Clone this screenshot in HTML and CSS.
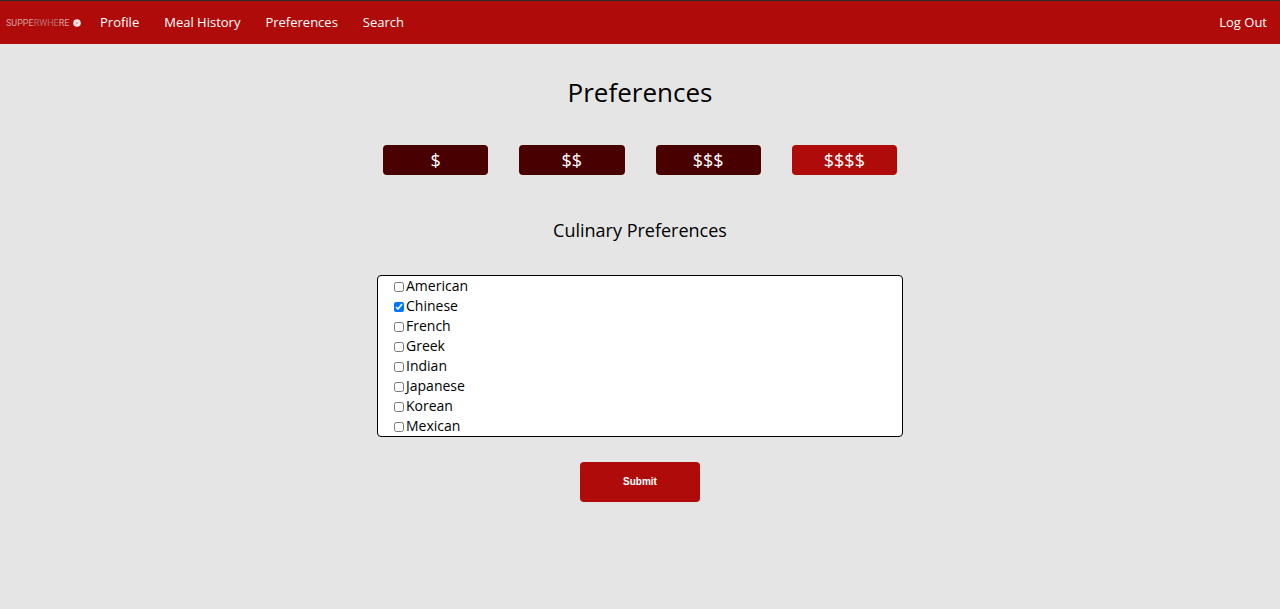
FILE: index.html
```html
<!DOCTYPE html>
<html lang="en">
<head>
<meta charset="utf-8">
<title>Supperwhere - Preferences</title>
<link rel="stylesheet" href="styles.css">
</head>
<body>
<nav class="navbar">
  <a class="logo" href="#">
    <span>SUPPE<span class="logo-dim">RWHE</span>RE</span>
    <svg class="logo-mark" viewBox="0 0 8 8" aria-hidden="true">
      <circle cx="4" cy="4" r="3.8" fill="#f0e4e4"/>
      <path d="M2.5 2.4 L3.4 3.4 M5.5 2.4 L4.6 3.4 M3 3.8 H5 L4 5.2 Z" fill="#e08080" stroke="#d89a9a" stroke-width=".4"/>
    </svg>
  </a>
  <a class="nav-link" href="#">Profile</a>
  <a class="nav-link" href="#">Meal History</a>
  <a class="nav-link" href="#">Preferences</a>
  <a class="nav-link" href="#">Search</a>
  <a class="nav-link logout" href="#">Log Out</a>
</nav>
<main class="content">
  <h1 class="title">Preferences</h1>
  <form class="form">
    <div class="prices">
      <button class="price" type="button">$</button>
      <button class="price" type="button">$$</button>
      <button class="price" type="button">$$$</button>
      <button class="price selected" type="button">$$$$</button>
    </div>
    <h2 class="subtitle">Culinary Preferences</h2>
    <div class="cuisines">
      <label class="cuisine"><input class="check" type="checkbox">American</label>
      <label class="cuisine"><input class="check" type="checkbox" checked>Chinese</label>
      <label class="cuisine"><input class="check" type="checkbox">French</label>
      <label class="cuisine"><input class="check" type="checkbox">Greek</label>
      <label class="cuisine"><input class="check" type="checkbox">Indian</label>
      <label class="cuisine"><input class="check" type="checkbox">Japanese</label>
      <label class="cuisine"><input class="check" type="checkbox">Korean</label>
      <label class="cuisine"><input class="check" type="checkbox">Mexican</label>
    </div>
    <button class="submit" type="submit">Submit</button>
  </form>
</main>
</body>
</html>
```
FILE: styles.css
```css
* {
  box-sizing: border-box;
}

body {
  margin: 0;
  background: #e5e5e5;
  color: #000;
  font-family: "Open Sans", "Noto Sans", sans-serif;
}

.navbar {
  display: flex;
  align-items: center;
  gap: 25px;
  padding: 0 13px 0 6px;
  border-top: 1px solid #2b2b2b;
  background: #af0b0a;
}

.logo {
  display: flex;
  align-items: center;
  justify-content: space-between;
  width: 75px;
  margin-right: -6px;
  color: #d3a3a1;
  font: 400 9px/16px Roboto, sans-serif;
  text-decoration: none;
}

.logo-dim {
  color: #b9706e;
}

.logo-mark {
  flex: none;
  width: 8px;
  height: 8px;
}

.nav-link {
  color: #fff;
  font-size: 13px;
  line-height: 43px;
  text-decoration: none;
}

.logout {
  margin-left: auto;
}

.content {
  padding: 28px 20px;
}

.title,
.subtitle {
  margin: 0;
  font-weight: 400;
  text-align: center;
}

.title {
  font-size: 26px;
  line-height: 40px;
}

.form {
  display: flex;
  flex-direction: column;
  max-width: 526px;
  margin: 0 auto;
}

.prices {
  display: grid;
  grid-template-columns: repeat(4, 1fr);
  gap: 31px;
  padding: 33px 6px 40px;
}

.price,
.submit {
  padding: 0;
  border: 0;
  border-radius: 4px;
  color: #fff;
}

.price {
  background: #480000;
  font-family: inherit;
  font-size: 18px;
  line-height: 30px;
}

.selected,
.submit {
  background: #af0b0a;
}

.subtitle {
  font-size: 18px;
  line-height: 30px;
}

.cuisines {
  display: flex;
  flex-direction: column;
  margin: 30px 0 25px;
  padding-left: 16px;
  border: 1px solid #000;
  border-radius: 4px;
  background: #fff;
}

.cuisine {
  display: flex;
  align-items: center;
  gap: 2px;
  font-size: 14px;
  line-height: 20px;
}

.check {
  width: 10px;
  height: 10px;
  margin: 2px 0 0;
}

.submit {
  align-self: center;
  width: 120px;
  font: 700 10px/40px "Liberation Sans", Arial, sans-serif;
}
```
